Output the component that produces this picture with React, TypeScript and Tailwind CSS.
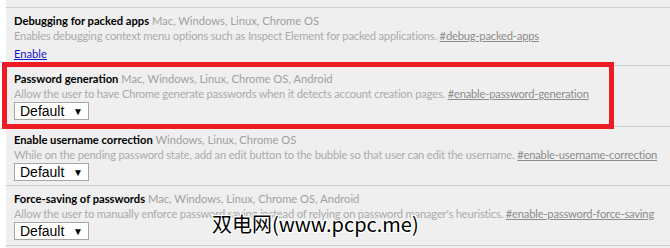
import React from "react";

const font = { fontFamily: 'Lato, "Open Sans", sans-serif' };

function Select() {
  return (
    <div className="mt-[1px] w-[75px] h-[18px] border border-[#a6a6a6] bg-white flex items-center justify-between pl-[5px] pr-[5px]">
      <span className="text-[14px] leading-none text-black" style={{ fontFamily: '"Liberation Sans", Arial, sans-serif' }}>Default</span>
      <span className="text-[10px] leading-none text-black">▼</span>
    </div>
  );
}

function Entry({
  title,
  platforms,
  desc,
  tag,
  children,
  className = "",
}: {
  title: string;
  platforms: string;
  desc: string;
  tag: string;
  children: React.ReactNode;
  className?: string;
}) {
  return (
    <div className={"border-t border-[#cdcdcd] pl-[8px] pt-[5px] " + className}>
      <div className="text-[11.2px] leading-[15px] whitespace-nowrap">
        <span className="font-bold text-black">{title}</span>{" "}
        <span className="text-[#a0a0a0]">{platforms}</span>
      </div>
      <div className="text-[11.2px] leading-[15px] whitespace-nowrap text-[#ababab] tracking-[-0.2px]">
        {desc} <span className="underline text-[#8c8c8c]">{tag}</span>
      </div>
      {children}
    </div>
  );
}

export default function App() {
  return (
    <div className="relative w-[670px] h-[248px] bg-white flex overflow-hidden" style={font}>
      <div className="w-[6px] shrink-0" />
      <div className="flex-1 bg-[#efefef] pt-[7px]">
        <Entry
          title="Debugging for packed apps"
          platforms="Mac, Windows, Linux, Chrome OS"
          desc="Enables debugging context menu options such as Inspect Element for packed applications."
          tag="#debug-packed-apps"
          className="h-[58px]"
        >
          <div className="mt-[3px] text-[11.2px] leading-[15px] text-[#1515d0] underline">Enable</div>
        </Entry>
        <Entry
          title="Password generation"
          platforms="Mac, Windows, Linux, Chrome OS, Android"
          desc="Allow the user to have Chrome generate passwords when it detects account creation pages."
          tag="#enable-password-generation"
          className="h-[61px]"
        >
          <Select />
        </Entry>
        <Entry
          title="Enable username correction"
          platforms="Windows, Linux, Chrome OS"
          desc="While on the pending password state, add an edit button to the bubble so that user can edit the username."
          tag="#enable-username-correction"
          className="h-[59px]"
        >
          <Select />
        </Entry>
        <Entry
          title="Force-saving of passwords"
          platforms="Mac, Windows, Linux, Chrome OS, Android"
          desc="Allow the user to manually enforce password saving instead of relying on password manager's heuristics."
          tag="#enable-password-force-saving"
          className="h-[60px]"
        >
          <Select />
        </Entry>
        <div className="border-t border-[#cdcdcd]" />
      </div>

      <div className="absolute left-[2px] top-[62px] w-[612px] h-[67px] border-[5px] border-[#ed1c24] pointer-events-none" />

      <div
        className="absolute left-[212px] top-[211px] text-[20px] leading-[26px] text-black whitespace-nowrap"
        style={{
          fontFamily: '"Noto Sans CJK SC", "Noto Sans", sans-serif',
          textShadow:
            "1px 0 0 #fff, -1px 0 0 #fff, 0 1px 0 #fff, 0 -1px 0 #fff, 1px 1px 0 #fff, -1px -1px 0 #fff, 1px -1px 0 #fff, -1px 1px 0 #fff",
        }}
      >
        双电网(www.pcpc.me)
      </div>
    </div>
  );
}
